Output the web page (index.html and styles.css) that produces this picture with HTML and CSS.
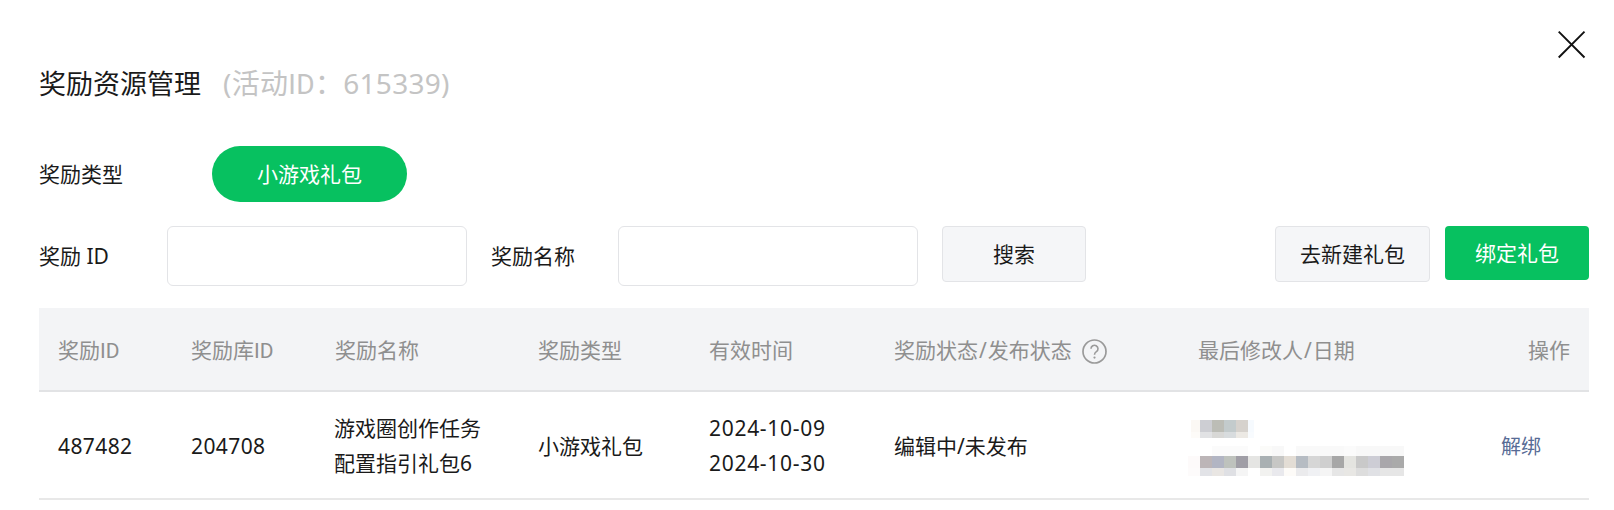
FILE: index.html
```html
<!DOCTYPE html>
<html lang="zh-CN">
<head>
<meta charset="utf-8">
<title>奖励资源管理</title>
<link rel="stylesheet" href="styles.css">
</head>
<body>
<div class="dialog">
  <div class="close-row">
    <svg class="close" viewBox="0 0 28 28" width="28" height="28"><path d="M0.7 0.7L26.5 26.5M26.5 0.7L0.7 26.5" stroke="#111" stroke-width="1.9" fill="none"/></svg>
  </div>
  <h1 class="title">奖励资源管理<span class="sub">(活动<span class="latin">ID</span>：615339)</span></h1>
  <div class="type-row">
    <span class="type-label">奖励类型</span>
    <span class="pill">小游戏礼包</span>
  </div>
  <div class="filter-row">
    <label class="f-label id-label">奖励 ID</label>
    <input class="f-input" type="text">
    <label class="f-label name-label">奖励名称</label>
    <input class="f-input" type="text">
    <button class="btn search">搜索</button>
    <button class="btn create">去新建礼包</button>
    <button class="btn bind">绑定礼包</button>
  </div>
  <table class="grid">
    <colgroup>
      <col class="c1"><col class="c2"><col class="c3"><col class="c4"><col class="c5"><col class="c6"><col class="c7"><col class="c8">
    </colgroup>
    <thead>
      <tr>
        <th>奖励<span class="latin">ID</span></th><th>奖励库<span class="latin">ID</span></th><th>奖励名称</th><th>奖励类型</th><th>有效时间</th>
        <th>奖励状态<span class="slash">/</span>发布状态<svg class="help" viewBox="0 0 25 25" width="25" height="25"><circle cx="12.5" cy="12.5" r="11.5" fill="none" stroke="#9a9a9a" stroke-width="1.7"/><path d="M9 9.8a3.5 3.5 0 1 1 5.4 2.9c-1.2.8-1.9 1.4-1.9 3" fill="none" stroke="#9a9a9a" stroke-width="1.6"/><circle cx="12.5" cy="18.6" r="1.1" fill="#9a9a9a"/></svg></th>
        <th>最后修改人<span class="slash">/</span>日期</th><th class="right">操作</th>
      </tr>
    </thead>
    <tbody>
      <tr>
        <td class="num">487482</td><td class="num">204708</td>
        <td class="name">游戏圈创作任务<br>配置指引礼包6</td>
        <td>小游戏礼包</td>
        <td class="date">2024-10-09<br>2024-10-30</td>
        <td>编辑中/未发布</td>
        <td><div class="mosaic m1"></div><div class="mosaic m2"></div></td>
        <td class="right"><a class="op">解绑</a></td>
      </tr>
    </tbody>
  </table>
</div>
</body>
</html>
```
FILE: styles.css
```css
* { box-sizing: border-box; }
html, body { margin: 0; background: #fff; }
body { font-family: "Noto Sans", "Noto Sans CJK SC", sans-serif; font-size: 21px; color: #1a1a1a; overflow: hidden; }
.dialog { width: 1614px; height: 510px; padding: 31px 25px 0 39px; }
.close-row { display: flex; justify-content: flex-end; height: 28px; padding-right: 3px; }
.close { display: block; }
.title { margin: 6px 0 0; font-size: 27px; font-weight: 400; line-height: 36px; height: 36px; color: #1a1a1a; }
.sub { margin-left: 22px; color: #c4c4c4; font-size: 28px; letter-spacing: 0.3px; }
.latin { font-family: Roboto, sans-serif; }
.slash { padding: 0 1px; }
.type-row { display: flex; align-items: center; margin-top: 45px; height: 56px; }
.type-label { width: 173px; line-height: 30px; }
.pill { width: 195px; height: 56px; padding-bottom: 3px; border-radius: 28px; background: #07c160; color: #fff; display: flex; align-items: center; justify-content: center; }
.filter-row { display: flex; align-items: flex-start; margin-top: 24px; height: 82px; }
.f-label { line-height: 60px; }
.id-label { width: 128px; }
.name-label { width: 127px; margin-left: 24px; }
.f-input { width: 300px; height: 60px; border: 1px solid #e3e4e7; border-radius: 6px; background: #fff; outline: none; }
.btn { font: inherit; border-radius: 4px; height: 56px; padding: 0 0 3px; display: block; }
.search { width: 144px; margin-left: 24px; background: #f5f6f8; border: 1px solid #e3e4e7; color: #1a1a1a; }
.create { width: 155px; margin-left: auto; background: #f5f6f8; border: 1px solid #e3e4e7; color: #1a1a1a; }
.bind { width: 144px; height: 54px; margin-left: 15px; background: #07c160; border: 0; color: #fff; }
.grid { width: 1550px; border-collapse: collapse; table-layout: fixed; }
.c1 { width: 133px; } .c2 { width: 144px; } .c3 { width: 203px; } .c4 { width: 171px; }
.c5 { width: 185px; } .c6 { width: 304px; } .c7 { width: 300px; } .c8 { width: 110px; }
th { height: 83px; padding: 0 0 0 19px; background: #f3f4f6; border-bottom: 2px solid #e2e3e5; font-weight: 400; text-align: left; color: #8f8f8f; white-space: nowrap; }
td { height: 108px; padding: 2px 0 0 19px; border-bottom: 2px solid #e8e8e8; line-height: 35px; color: #1a1a1a; white-space: nowrap; }
td.num { letter-spacing: 0.4px; }
td.date { letter-spacing: 0.7px; }
td.name { padding-left: 18px; }
th.right { text-align: right; padding: 0 19px 0 0; }
td.right { text-align: right; padding: 2px 48px 0 0; }
.help { vertical-align: -6px; margin-left: 10px; }
.op { color: #576b95; font-size: 20px; }
.mosaic { background-repeat: no-repeat; }
.m1 { width: 63px; height: 18px; margin: 4px 0 8px -7px; background-size: 100% 12px, 100% 6px; background-position: 0 0, 0 12px; background-image:
  linear-gradient(90deg, #fbf8f4 0 9px, #cdced3 9px 21px, #bcbdb6 21px 33px, #c3cbcc 33px 45px, #d6d2cd 45px 57px, #f6fafe 57px),
  linear-gradient(90deg, #fdfbf8 0 9px, #e1e2e4 9px 21px, #d8d8d6 21px 33px, #d8dcde 33px 45px, #ece9e4 45px 57px, #f8fbfe 57px); }
.m2 { width: 216px; height: 30px; margin-left: -10px; background-size: 100% 12px, 100% 8px, 100% 10px; background-position: 0 10px, 0 22px, 0 0; background-image:
  linear-gradient(90deg, #fdfafa 0 12px, #bcb5b7 12px 24px, #b2b5c3 24px 36px, #bec2bd 36px 48px, #a09ea6 48px 60px, #e5e5e3 60px 72px, #a9b0b2 72px 84px, #c7c7c5 84px 96px, #e3ddd5 96px 108px, #b6bcc3 108px 120px, #d6d6d6 120px 132px, #cfcfcf 132px 144px, #a7a7a7 144px 156px, #e4e4e0 156px 168px, #c9c9c9 168px 180px, #cdcdd5 180px 192px, #a9a7ab 192px 204px, #aaaaaa 204px 216px),
  linear-gradient(90deg, #fdfbfb 0 12px, #e2e3e7 12px 24px, #e9e6e3 24px 36px, #dfe0e4 36px 48px, #f5f5f5 48px 60px, #fff 60px 72px, #f2f2f0 72px 84px, #e9e9ed 84px 96px, #fdfbf8 96px 108px, #ebebed 108px 120px, #f0f1f4 120px 132px, #f5f5f5 132px 144px, #e6e6e6 144px 156px, #e8e7e4 156px 168px, #dddddd 168px 180px, #e0e1e5 180px 192px, #e6e6e6 192px 216px),
  linear-gradient(90deg, #fff 0 24px, #fbfbfb 24px 60px, #fff 60px 72px, #fbfbf9 72px 84px, #f8f8f8 84px 96px, #fff 96px 108px, #f9f9f9 108px 156px, #fbfbfb 156px 168px, #f8f8f8 168px 216px); }
```
